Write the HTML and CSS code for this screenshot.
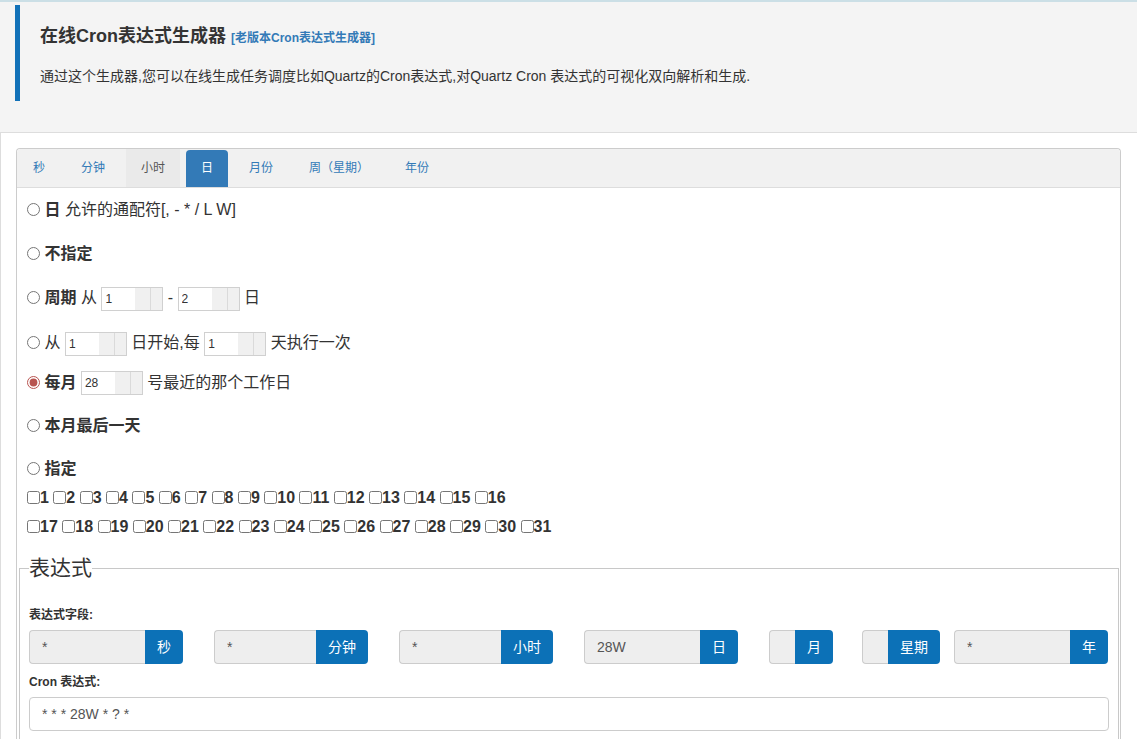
FILE: index.html
```html
<!DOCTYPE html>
<html lang="zh-CN">

<head>
     <meta charset="UTF-8">
     <title>在线Cron表达式生成器</title>
     <link rel="stylesheet" href="styles.css">
</head>

<body>
     <div class="header">
          <div class="intro">
               <h1>在线Cron表达式生成器 <a href="#">[老版本Cron表达式生成器]</a></h1>
               <p>通过这个生成器,您可以在线生成任务调度比如Quartz的Cron表达式,对Quartz Cron 表达式的可视化双向解析和生成.</p>
          </div>
     </div>

     <div class="main">
          <div class="panel">
               <div class="tabs">
                    <a href="#">秒</a>
                    <a href="#">分钟</a>
                    <a href="#" class="hover">小时</a>
                    <a href="#" class="active">日</a>
                    <a href="#">月份</a>
                    <a href="#">周（星期）</a>
                    <a href="#">年份</a>
               </div>

               <div class="panel-body">
                    <div class="line"><input type="radio" name="day"> <b>日</b> 允许的通配符[, - * / L W]</div>
                    <div class="line"><input type="radio" name="day"> <b>不指定</b></div>
                    <div class="line"><input type="radio" name="day"> <b>周期</b> 从
                         <span class="spin"><input value="1"><i></i><i></i></span> -
                         <span class="spin"><input value="2"><i></i><i></i></span> 日</div>
                    <div class="line tight"><input type="radio" name="day"> 从
                         <span class="spin"><input value="1"><i></i><i></i></span> 日开始,每
                         <span class="spin"><input value="1"><i></i><i></i></span> 天执行一次</div>
                    <div class="line near"><input type="radio" name="day" checked> <b>每月</b>
                         <span class="spin"><input value="28"><i></i><i></i></span> 号最近的那个工作日</div>
                    <div class="line near"><input type="radio" name="day"> <b>本月最后一天</b></div>
                    <div class="line last"><input type="radio" name="day"> <b>指定</b></div>
                    <div class="days">
                         <label><input type="checkbox">1</label> <label><input type="checkbox">2</label> <label><input type="checkbox">3</label> <label><input type="checkbox">4</label> <label><input type="checkbox">5</label> <label><input type="checkbox">6</label> <label><input type="checkbox">7</label> <label><input type="checkbox">8</label> <label><input type="checkbox">9</label> <label><input type="checkbox">10</label> <label><input type="checkbox">11</label> <label><input type="checkbox">12</label> <label><input type="checkbox">13</label> <label><input type="checkbox">14</label> <label><input type="checkbox">15</label> <label><input type="checkbox">16</label>
                    </div>
                    <div class="days">
                         <label><input type="checkbox">17</label> <label><input type="checkbox">18</label> <label><input type="checkbox">19</label> <label><input type="checkbox">20</label> <label><input type="checkbox">21</label> <label><input type="checkbox">22</label> <label><input type="checkbox">23</label> <label><input type="checkbox">24</label> <label><input type="checkbox">25</label> <label><input type="checkbox">26</label> <label><input type="checkbox">27</label> <label><input type="checkbox">28</label> <label><input type="checkbox">29</label> <label><input type="checkbox">30</label> <label><input type="checkbox">31</label>
                    </div>

                    <fieldset class="result">
                         <legend>表达式</legend>
                         <div class="label first">表达式字段:</div>
                         <div class="fields">
                              <div class="fg"><input value="*"><span>秒</span></div>
                              <div class="fg"><input value="*"><span>分钟</span></div>
                              <div class="fg"><input value="*"><span>小时</span></div>
                              <div class="fg"><input value="28W"><span>日</span></div>
                              <div class="fg month"><input value=""><span>月</span></div>
                              <div class="fg week"><input value=""><span>星期</span></div>
                              <div class="fg year"><input value="*"><span>年</span></div>
                         </div>
                         <div class="label">Cron 表达式:</div>
                         <input class="cron" value="* * * 28W * ? *">
                    </fieldset>
               </div>
          </div>
     </div>
</body>

</html>
```

FILE: styles.css
```css
* {
     margin: 0;
     padding: 0;
     box-sizing: border-box;
}

body {
     font-family: "Liberation Sans", "Noto Sans CJK SC", sans-serif;
     color: #333;
     background: #fff;
}

a {
     text-decoration: none;
}

/* header */
.header {
     background: #f4f4f4;
     border-top: 2px solid #cbdfe6;
     border-bottom: 1px solid #ddd;
     padding: 3px 0 31px 15px;
}

.intro {
     border-left: 5px solid #1171b8;
     height: 96px;
     padding: 19px 0 0 20px;
}

.intro h1 {
     font-size: 18px;
     line-height: 24px;
     font-weight: bold;
}

.intro h1 a {
     font-size: 12px;
     color: #337ab7;
}

.intro p {
     margin-top: 16px;
     font-size: 14px;
     line-height: 20px;
}

/* main */
.main {
     border-left: 1px solid #ddd;
     padding: 15px 16px 0 15px;
}

.panel {
     border: 1px solid #ccc;
     border-bottom: 0;
     border-radius: 4px 4px 0 0;
}

.tabs {
     display: flex;
     gap: 6px;
     height: 39px;
     padding-left: 1px;
     background: #f1f1f1;
     border-bottom: 1px solid #ddd;
     border-radius: 4px 4px 0 0;
}

.tabs a {
     padding: 0 15px;
     font-size: 12px;
     line-height: 38px;
     color: #337ab7;
     white-space: nowrap;
}

.tabs a.hover {
     background: #eaeaea;
     color: #555;
}

.tabs a.active {
     background: #337ab7;
     color: #fff;
     margin-top: 1px;
     line-height: 37px;
     border-radius: 4px 4px 0 0;
}

.panel-body {
     padding: 10px 1px 0 2px;
}

.line {
     padding-left: 8px;
     font-size: 16px;
     line-height: 24px;
     margin-bottom: 20px;
}

.line.tight {
     margin-bottom: 15px;
}

.line.near {
     margin-bottom: 19px;
}

.line.last {
     margin-bottom: 2px;
}

.line input[type=radio] {
     width: 13px;
     height: 13px;
     margin: 0;
     vertical-align: -1px;
     accent-color: #b85450;
}

.spin {
     display: inline-flex;
     height: 24px;
     width: 62px;
     border: 1px solid #d0d0d0;
     vertical-align: middle;
}

.spin input {
     width: 33px;
     border: 0;
     outline: 0;
     padding: 0 3px;
     font: 12px "Liberation Sans", sans-serif;
     color: #333;
}

.spin i {
     width: 15px;
     background: #f0f0f0;
}

.spin i + i {
     width: 12px;
     border-left: 1px solid #dadada;
}

.days {
     padding-left: 8px;
     font-size: 16px;
     font-weight: bold;
     line-height: 29px;
     white-space: nowrap;
}

.days input {
     width: 13px;
     height: 13px;
     margin: 0;
     vertical-align: -1px;
}

/* expression */
.result {
     margin-top: 15px;
     border: 1px solid #c8c8c8;
     border-bottom: 0;
     padding: 0 9px 40px;
}

.result legend {
     font-size: 21px;
     line-height: 24px;
     color: #333;
}

.label {
     font-size: 12px;
     font-weight: bold;
     line-height: 17px;
     margin: 10px 0 6px;
}

.label.first {
     margin-top: 27px;
}

.fields {
     display: flex;
}

.fg {
     display: flex;
     width: 154px;
     height: 34px;
}

.fg + .fg {
     margin-left: 31px;
}

.fg.month {
     width: 64px;
}

.fg.week {
     width: 78px;
     margin-left: 29px;
}

.fg.year {
     margin-left: 14px;
}

.fg input {
     flex: 1;
     min-width: 0;
     background: #eee;
     border: 1px solid #ccc;
     border-right: 0;
     border-radius: 4px 0 0 4px;
     padding: 0 12px;
     font: 14px "Liberation Sans", sans-serif;
     color: #555;
     outline: 0;
}

.fg span {
     background: #0c71b7;
     color: #fff;
     font-size: 14px;
     line-height: 34px;
     padding: 0 12px;
     border-radius: 0 4px 4px 0;
     white-space: nowrap;
}

.cron {
     display: block;
     width: 100%;
     height: 34px;
     border: 1px solid #ccc;
     border-radius: 4px;
     padding: 0 12px;
     font: 14px "Liberation Sans", sans-serif;
     color: #555;
     outline: 0;
}
```
